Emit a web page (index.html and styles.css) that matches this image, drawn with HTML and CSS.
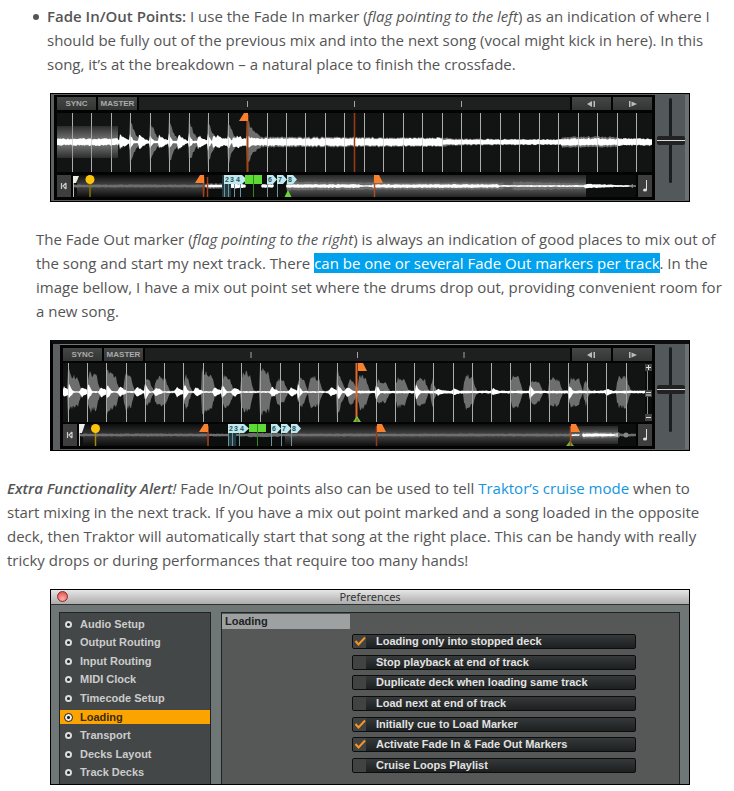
FILE: index.html
```html
<!DOCTYPE html>
<html lang="en">
<head>
<meta charset="utf-8">
<title>Fade In/Out Points</title>
<link rel="stylesheet" href="styles.css">
</head>
<body>
<article>
  <ul class="points">
    <li><strong>Fade In/Out Points:</strong> I use the Fade In marker (<em>flag pointing to the left</em>) as an indication of where I should be fully out of the previous mix and into the next song (vocal might kick in here). In this song, it’s at the breakdown – a natural place to finish the crossfade.</li>
  </ul>

  <figure class="deck">
    <div class="panel">
      <div class="toolbar">
        <button type="button">SYNC</button>
        <button type="button">MASTER</button>
        <svg class="ticks" viewBox="0 0 429 13" preserveAspectRatio="xMinYMid slice"><path d="M108 4v6M214.500 4v6M321 4v6" stroke="#a5a5a5"/></svg>
        <button type="button" aria-label="Beat back"><svg width="10" height="6"><path d="M5 0v6L0 3z M6.500 0h1.500v6h-1.500z" fill="#bbb"/></svg></button>
        <button type="button" aria-label="Beat forward"><svg width="10" height="6"><path d="M1 0h1.500v6H1z M3.500 .5L9 3L3.500 5.500z" fill="#bbb"/></svg></button>
      </div>
      <svg class="wave" id="wave-a" viewBox="0 0 595 59" preserveAspectRatio="xMinYMid slice">
        <defs>
          <linearGradient id="pad" x2="0" y2="1"><stop offset="0" stop-color="#333"/><stop offset=".5" stop-color="#999"/><stop offset="1" stop-color="#333"/></linearGradient>
        </defs>
        <g class="grid"></g>
        <rect x="0" y="13" width="61" height="32" fill="url(#pad)" opacity=".8"/>
        <path class="halo"/>
        <path class="core"/>
        <g class="grid-over"></g>
        <path d="M190.500 2v57" stroke="#a5461a" stroke-width="2"/>
        <path d="M191 0h-4l-5 8h9z" fill="#f9812d"/>
        <path d="M297.500 0v59" stroke="#a03a10" stroke-width="1.500"/>
      </svg>
      <div class="overview">
        <button type="button" aria-label="Jump to start"><svg width="8" height="8"><path d="M1.500 1v6M6 1L3 4l3 3M6 1v6" fill="none" stroke="#ccc" stroke-width="1.200"/></svg></button>
        <svg class="strip" id="strip-a" viewBox="0 0 563 22" preserveAspectRatio="xMinYMid slice">
          <defs>
            <linearGradient id="dim" x2="0" y2="1"><stop offset="0" stop-color="#0c0c0c"/><stop offset=".5" stop-color="#484848"/><stop offset="1" stop-color="#0c0c0c"/></linearGradient>
            <linearGradient id="lit" x2="0" y2="1"><stop offset="0" stop-color="#303030"/><stop offset=".5" stop-color="#8a8a8a"/><stop offset="1" stop-color="#303030"/></linearGradient>
          </defs>
          <rect x="4" width="128" height="22" fill="url(#dim)"/>
          <rect x="214" width="299" height="22" fill="url(#lit)" opacity=".7"/>
          <path class="halo"/>
          <path class="core"/>
          <path d="M556 11l4-2v4z" fill="#888"/>
          <rect x="149" width="9" height="22" fill="#223a42"/>
          <path d="M151.500 4v18M155.500 4v18M161.500 4v18M167.500 4v18M194.500 4v18M204.500 4v18" stroke="#6d959c"/>
          <path d="M0.500 4v18" stroke="#bbb"/><path d="M0 1h6l-3 7H0z" fill="#eef0df"/>
          <path d="M17 5v17" stroke="#857500" stroke-width="1.500"/><circle cx="17" cy="4.500" r="4.500" fill="#fdc40a"/>
          <path d="M130.500 2v20M134.500 2v20" stroke="#a4421a" stroke-width="1.500"/><path d="M131 0h-4l-5 8h9z" fill="#f9812d"/>
          <path d="M151 0h18l5 4.500l-5 4.500h-18z M194 0h6l4 4.500l-4 4.500h-6z M204 0h6l4 4.500l-4 4.500h-6z M214 0h6l4 4.500l-4 4.500h-6z" fill="#bfe9ee"/>
          <g class="cue"><text x="152" y="7">2</text><text x="157" y="7">3</text><text x="163" y="7">4</text><text x="195" y="7">6</text><text x="205" y="7">7</text><text x="215" y="7">8</text></g>
          <path d="M172 0h17v9h-17z" fill="#5fd936"/><path d="M180.500 0v22" stroke="#2c8d19"/>
          <path d="M215 15l3.500 7h-7z" fill="#67d838"/>
          <path d="M301.500 2v20" stroke="#b14c1c" stroke-width="1.500"/><path d="M301 0h5l4 8h-9z" fill="#f9812d"/>
        </svg>
        <button type="button" aria-label="Key lock"><svg width="8" height="14"><path d="M5.500 1v10" stroke="#ddd"/><ellipse cx="4" cy="11" rx="2" ry="1.500" fill="#ddd"/></svg></button>
      </div>
    </div>
    <input class="fader" type="range" aria-label="Tempo" min="0" max="100" value="50">
  </figure>

  <p class="indented">The Fade Out marker (<em>flag pointing to the right</em>) is always an indication of good places to mix out of the song and start my next track. There <mark>can be one or several Fade Out markers per track</mark>. In the image bellow, I have a mix out point set where the drums drop out, providing convenient room for a new song.</p>

  <figure class="deck deck-railed">
    <div class="panel">
      <div class="toolbar">
        <button type="button">SYNC</button>
        <button type="button">MASTER</button>
        <svg class="ticks" viewBox="0 0 423 13" preserveAspectRatio="xMinYMid slice"><path d="M105.500 4v6M211.500 4v6M317.500 4v6" stroke="#a5a5a5"/></svg>
        <button type="button" aria-label="Beat back"><svg width="10" height="6"><path d="M5 0v6L0 3z M6.500 0h1.500v6h-1.500z" fill="#bbb"/></svg></button>
        <button type="button" aria-label="Beat forward"><svg width="10" height="6"><path d="M1 0h1.500v6H1z M3.500 .5L9 3L3.500 5.500z" fill="#bbb"/></svg></button>
      </div>
      <svg class="wave" id="wave-b" viewBox="0 0 589 59" preserveAspectRatio="xMinYMid slice">
        <g class="grid"></g>
        <path class="halo"/>
        <path class="core"/>
        <g class="grid-over"></g>
        <path d="M293.500 0v59" stroke="#e0682c" stroke-width="2"/>
        <path d="M295 0h5l4 8h-9z" fill="#f9812d"/>
        <path d="M294 53l4 6h-8z" fill="#74c443"/><path d="M294 56v3" stroke="#8a4a1c"/>
        <rect x="582" width="7" height="59" fill="#0a0b0b"/>
        <path d="M584.500 8v46" stroke="#888"/>
        <path d="M582 1h7v7h-7z M582 27h7v7h-7z M582 51h7v7h-7z" fill="#444"/>
        <path d="M583 4.500h5M585.500 2v5M583 29.500h5M583 32h5M583 54.500h5" stroke="#ddd"/>
      </svg>
      <div class="overview">
        <button type="button" aria-label="Jump to start"><svg width="8" height="8"><path d="M1.500 1v6M6 1L3 4l3 3M6 1v6" fill="none" stroke="#ccc" stroke-width="1.200"/></svg></button>
        <svg class="strip" id="strip-b" viewBox="0 0 557 22" preserveAspectRatio="xMinYMid slice">
          <rect x="4" width="126" height="22" fill="url(#dim)" opacity=".7"/>
          <rect x="206" width="285" height="22" fill="url(#dim)"/>
          <rect x="491" y="2" width="48" height="18" fill="url(#lit)" opacity=".7"/>
          <path class="halo"/>
          <path class="core"/>
          <path d="M534 11l5-2v4z" fill="#ccc"/><circle cx="547" cy="11" r="2.500" fill="#888"/>
          <rect x="149" width="8" height="22" fill="#223a42"/>
          <path d="M149.500 4v18M153.500 4v18M160.500 4v18M192.500 4v18M202.500 4v18M212.500 4v18" stroke="#6d959c"/>
          <path d="M0.500 4v18" stroke="#bbb"/><path d="M0 0h6l-3 9H0z" fill="#eee"/>
          <path d="M16.500 5v17" stroke="#a58b08" stroke-width="1.500"/><circle cx="16.500" cy="4.500" r="4.500" fill="#fdc40a"/>
          <path d="M129 2v20" stroke="#a4421a" stroke-width="1.500"/><path d="M129 0h-4l-5 8h9z" fill="#f9812d"/>
          <path d="M149 0h16l5 4.500l-5 4.500h-16z M192 0h6l4 4.500l-4 4.500h-6z M202 0h6l4 4.500l-4 4.500h-6z M212 0h6l4 4.500l-4 4.500h-6z" fill="#bfe9ee"/>
          <g class="cue"><text x="150" y="7">2</text><text x="155" y="7">3</text><text x="161" y="7">4</text><text x="193" y="7">6</text><text x="203" y="7">7</text><text x="213" y="7">8</text></g>
          <path d="M170 0h17v8h-17z" fill="#5fd936"/><path d="M178.500 0v22" stroke="#2c8d19"/>
          <path d="M297.500 2v20" stroke="#8c3f1c" stroke-width="1.500"/><path d="M298 0h5l4 8h-9z" fill="#f9812d"/>
          <path d="M491 17l4 5h-8z" fill="#67b838"/>
          <path d="M491.500 2v20" stroke="#b14c1c" stroke-width="1.500"/><path d="M492 0h5l4 8h-9z" fill="#f9812d"/>
        </svg>
        <button type="button" aria-label="Key lock"><svg width="8" height="14"><path d="M5.500 1v10" stroke="#ddd"/><ellipse cx="4" cy="11" rx="2" ry="1.500" fill="#ddd"/></svg></button>
      </div>
    </div>
    <input class="fader" type="range" aria-label="Tempo" min="0" max="100" value="50">
  </figure>

  <p><em><strong>Extra Functionality Alert</strong>!</em> Fade In/Out points also can be used to tell <a href="#">Traktor’s cruise mode</a> when to start mixing in the next track. If you have a mix out point marked and a song loaded in the opposite deck, then Traktor will automatically start that song at the right place. This can be handy with really tricky drops or during performances that require too many hands!</p>

  <figure class="prefs">
    <header class="titlebar"><button class="close" type="button" aria-label="Close"></button><span>Preferences</span></header>
    <div class="prefs-body">
      <div class="sections">
        <label><input type="radio" name="section"><span>Audio Setup</span></label>
        <label><input type="radio" name="section"><span>Output Routing</span></label>
        <label><input type="radio" name="section"><span>Input Routing</span></label>
        <label><input type="radio" name="section"><span>MIDI Clock</span></label>
        <label><input type="radio" name="section"><span>Timecode Setup</span></label>
        <label><input type="radio" name="section" checked><span>Loading</span></label>
        <label><input type="radio" name="section"><span>Transport</span></label>
        <label><input type="radio" name="section"><span>Decks Layout</span></label>
        <label><input type="radio" name="section"><span>Track Decks</span></label>
      </div>
      <div class="settings">
        <h2>Loading</h2>
        <div class="options">
          <label><input type="checkbox" checked><svg viewBox="0 0 12 12"><path d="M1.500 6L4.500 9.500L11 2.500"/></svg><span>Loading only into stopped deck</span></label>
          <label><input type="checkbox"><svg viewBox="0 0 12 12"><path d="M1.500 6L4.500 9.500L11 2.500"/></svg><span>Stop playback at end of track</span></label>
          <label><input type="checkbox"><svg viewBox="0 0 12 12"><path d="M1.500 6L4.500 9.500L11 2.500"/></svg><span>Duplicate deck when loading same track</span></label>
          <label><input type="checkbox"><svg viewBox="0 0 12 12"><path d="M1.500 6L4.500 9.500L11 2.500"/></svg><span>Load next at end of track</span></label>
          <label><input type="checkbox" checked><svg viewBox="0 0 12 12"><path d="M1.500 6L4.500 9.500L11 2.500"/></svg><span>Initially cue to Load Marker</span></label>
          <label><input type="checkbox" checked><svg viewBox="0 0 12 12"><path d="M1.500 6L4.500 9.500L11 2.500"/></svg><span>Activate Fade In &amp; Fade Out Markers</span></label>
          <label><input type="checkbox"><svg viewBox="0 0 12 12"><path d="M1.500 6L4.500 9.500L11 2.500"/></svg><span>Cruise Loops Playlist</span></label>
        </div>
      </div>
    </div>
  </figure>
</article>
<script src="waves.js"></script>
</body>
</html>
```
FILE: styles.css
```css
* { box-sizing: border-box; }

body {
  margin: 0;
  padding: 4px 10px 6px 7px;
  background: #fff;
  color: #555;
  font: 15px/24px "Open Sans", sans-serif;
}

p { margin: 0; }
.indented { padding-left: 29px; }

.points {
  margin: 0;
  padding-left: 40px;
  list-style: none;
}
.points li { position: relative; }
.points li::before {
  content: "";
  position: absolute;
  left: -14px;
  top: 10px;
  width: 6px;
  height: 6px;
  border-radius: 50%;
  background: #555;
}

strong { font-weight: 600; }
em { font-style: italic; }
mark { background: #00a2ed; color: #fff; }
a { color: #1296e0; text-decoration: none; }

button {
  display: flex;
  align-items: center;
  justify-content: center;
  margin: 0;
  padding: 0;
  border: 0;
}

figure {
  max-width: 640px;
  margin: 17px 34px 25px 43px;
  border: 1px solid #000;
}

/* Track decks */
.deck {
  display: grid;
  grid-template-columns: 1fr 34px;
  padding: 1px 0 1px 3px;
  background: #5d6061;
}

.panel {
  display: flex;
  flex-direction: column;
  gap: 3px;
  min-width: 0;
  padding: 2px 3px 3px;
  background: #030303;
}

.deck-railed {
  border-left-width: 3px;
  padding: 0 0 1px 7px;
  border-top: 4px solid #0c0d0e;
}
.deck-railed .panel {
  gap: 2px;
  border-top: 1px solid #777;
  padding-top: 3px;
}

.toolbar { display: flex; gap: 2px; height: 13px; }

.toolbar button {
  flex: 0 0 39px;
  background: linear-gradient(#454646, #333434);
  color: #aaa;
  font: bold 8px/13px "Liberation Sans", sans-serif;
}

.ticks { flex: 1; min-width: 0; height: 13px; background: #1e2020; }

.wave { display: block; width: 100%; height: 59px; background: #121414; }

.overview { display: flex; gap: 2px; height: 22px; }
.overview button { flex: 0 0 14px; background: #3e3e3f; }
.strip { flex: 1; min-width: 0; height: 22px; background: #0d0e0e; }

.halo { fill: #6e6e6e; }
.core { fill: #fff; }
.grid path { stroke: #8c8c8c; }
.grid-over path { stroke: #c4c4c4; opacity: .6; }
.cue text { fill: #27505a; font: bold 7px "Liberation Sans", sans-serif; }

.fader {
  appearance: none;
  writing-mode: vertical-lr;
  width: 34px;
  height: 0;
  min-height: 100%;
  margin: 0;
  padding: 3px 0 17px;
  border-right: 4px solid #6c7173;
  background: #53585a;
}
.fader::-webkit-slider-runnable-track {
  width: 3px;
  border-radius: 2px;
  background: #1b1e20;
}
.fader::-webkit-slider-thumb {
  appearance: none;
  width: 28px;
  height: 9px;
  margin-left: -12px;
  border-radius: 2px;
  background: linear-gradient(#222 4px, #ddd 4px, #ddd 5px, #222 5px);
}

/* Preferences window */
.prefs {
  margin-bottom: 0;
  background: #6f7676;
  color: #ccc;
  font: bold 11px/15px "Liberation Sans", sans-serif;
}

.titlebar {
  position: relative;
  height: 15px;
  border-bottom: 1px solid #333;
  background: linear-gradient(#e6e6e6, #acacac);
  color: #333;
  font: 11px/14px "Noto Sans", sans-serif;
  text-align: center;
}

.close {
  position: absolute;
  left: 6px;
  top: 1px;
  width: 11px;
  height: 11px;
  border: 1px solid #8f2a2a;
  border-radius: 50%;
  background: radial-gradient(circle at 50% 75%, #ffb0a8, #d9433f);
}

.prefs-body {
  display: grid;
  grid-template-columns: 152px 1fr;
  gap: 10px;
  padding: 7px 9px 0 8px;
}

.sections {
  display: grid;
  grid-auto-rows: 1fr;
  height: 172px;
  padding: 2px 0 2px;
  border: 1px solid #222;
  border-bottom: 0;
  background: #444748;
}
.sections label {
  display: flex;
  align-items: center;
  gap: 8px;
  padding-left: 4px;
}
.sections label:has(:checked) {
  background: linear-gradient(transparent 2px, #fba400 2px, #fba400 calc(100% - 2px), transparent calc(100% - 2px));
  color: #3a2a10;
}
.sections input {
  appearance: none;
  width: 7px;
  height: 7px;
  margin: 0 0 0 1px;
  border: 2px solid #ddd;
  border-radius: 50%;
  background: #222;
}
.sections input:checked {
  width: 9px;
  height: 9px;
  margin: 0 -1px 0 0;
  border: 1px solid #222;
  background: radial-gradient(#222 1px, #eee 2px);
}

.settings {
  border: 1px solid #222;
  border-bottom: 0;
  background: #565757;
}
.settings h2 {
  width: 128px;
  margin: 1px 0 5px;
  padding-left: 3px;
  background: #9da1a1;
  color: #222;
  font: inherit;
}

.options {
  display: flex;
  flex-direction: column;
  justify-content: space-between;
  height: 139px;
  margin: 0 43px 0 130px;
}
.options label {
  position: relative;
  display: flex;
  align-items: center;
  gap: 10px;
  height: 15px;
  overflow: hidden;
  border: 1px solid #0c0d0d;
  border-radius: 2px;
  background: linear-gradient(#363939, #1d2020);
  color: #e2e2e2;
  line-height: 13px;
}
.options input {
  appearance: none;
  width: 13px;
  height: 13px;
  margin: 0;
  background: #414343;
}
.options svg {
  position: absolute;
  left: 1px;
  top: 0;
  width: 12px;
  height: 12px;
  visibility: hidden;
}
.options :checked + svg { visibility: visible; }
.options path { fill: none; stroke: #f99422; stroke-width: 2; }
```
FILE: waves.js
```js
// Each burst is [start, end, peak, tail]: the level falls from peak to tail.
const noise = x => { const v = Math.sin(x * 12.9898) * 43758.5453; return v - Math.floor(v); };

function envelope(bursts, width, mid, jitter) {
  const level = new Array(width + 1).fill(0);
  for (const [a, b, peak, tail] of bursts) {
    for (let x = Math.max(0, a); x <= Math.min(width, b); x++) {
      const v = peak + (tail - peak) * (x - a) / (b - a || 1);
      level[x] = Math.max(level[x], v);
    }
  }
  const top = [], bottom = [];
  level.forEach((v, x) => {
    const up = v * (1 - jitter * noise(x + 1)), down = v * (1 - jitter * noise(x + 500));
    top.push(`${x} ${(mid - up).toFixed(1)}`);
    bottom.unshift(`${x} ${(mid + down).toFixed(1)}`);
  });
  return `M${top.join('L')}L${bottom.join('L')}Z`;
}

function draw(id, width, mid, halo, core) {
  const svg = document.getElementById(id);
  svg.querySelector('.halo').setAttribute('d', envelope(halo, width, mid, .3));
  svg.querySelector('.core').setAttribute('d', envelope(core, width, mid, .4));
  return svg;
}

function grid(svg, xs) {
  const lines = xs.map(x => `<path d="M${x + .5} 0v59"/>`).join('');
  svg.querySelector('.grid').innerHTML = lines;
  svg.querySelector('.grid-over').innerHTML = lines;
}

// Breakdown track
const beatsA = Array.from({ length: 30 }, (_, i) => Math.round(15 + i * 19.45));
const haloA = [[190, 196, 26, 14], [196, 206, 13, 5], [206, 390, 6, 5], [390, 505, 4, 3], [505, 560, 6, 6], [560, 595, 4, 4]];
const coreA = [[0, 61, 4, 4], [0, 195, 1.5, 1.5], [63, 72, 8, 2], [156, 170, 7, 4], [176, 190, 6, 4], [190, 196, 7, 5], [196, 385, 4.5, 4.5], [385, 505, 3, 3], [505, 595, 4, 4]];
for (const x of [73, 93, 112, 132, 151, 171]) {
  haloA.push([x, x + 4, 26, 13], [x + 4, x + 9, 12, 3]);
  coreA.push([x, x + 3, 9, 3], [x + 9, x + 18, 8, 2]);
}
grid(draw('wave-a', 595, 29, haloA, coreA), beatsA);

draw('strip-a', 563, 11,
  [[0, 132, 1.5, 1.5], [133, 160, 3, 3], [214, 300, 5, 4], [300, 430, 4, 4], [440, 512, 5, 3], [512, 563, 1, 1]],
  [[133, 150, 1.5, 1.5], [158, 172, 3, 2], [189, 200, 2, 2], [214, 286, 2, 2], [286, 300, 1, 1], [300, 425, 2, 2], [425, 512, 1, 1], [512, 540, 2.5, 1.5], [540, 556, 1, 1]]);

// Drum track
const beatsB = Array.from({ length: 30 }, (_, i) => Math.round(5 + i * 19.23));
const hitsB = [[68, 80, 20], [88, 99, 22], [107, 118, 21], [124, 133, 20], [145, 152, 15], [155, 168, 17], [184, 190, 18],
  [202, 214, 23], [222, 232, 18], [241, 252, 23], [260, 271, 26], [276, 286, 15], [298, 306, 17], [309, 321, 18], [338, 344, 14],
  [348, 356, 14], [358, 368, 19], [376, 388, 13], [396, 407, 17], [416, 427, 16], [431, 435, 16], [464, 475, 19], [511, 521, 20],
  [530, 541, 14], [549, 561, 17], [569, 581, 17], [584, 588, 15], [617, 629, 19]];
const haloB = [[0, 582, 1.5, 1.5]];
for (const [a, b, h] of hitsB) {
  const s = a - 63, e = b - 63;
  haloB.push([s, s + 2, h * .6, h], [s + 2, e - 2, h, h * .85], [e - 2, e + 1, h * .75, 4]);
}
for (const x of [68, 107, 202, 260, 337]) haloB.push([x - 63, x - 60, 28, 18]);
const coreB = [[0, 290, 1, 1], [290, 582, 1.5, 1.5]];
for (const x of [62, 80, 99, 118, 135, 154, 175, 194, 213, 232, 270, 289, 329, 345, 436, 452, 491, 605]) {
  const p = x > 400 ? 4 : 6;
  coreB.push([x - 63, x - 61, 2, p], [x - 61, x - 54, p, 1]);
}
for (const x of [69, 88, 107, 145, 184, 222, 298, 338, 376, 416, 530, 569]) coreB.push([x - 63, x - 59, 9, 2]);
grid(draw('wave-b', 589, 29, haloB, coreB), beatsB);

draw('strip-b', 557, 11,
  [[0, 557, 1.5, 1.5], [170, 200, 2.5, 2], [206, 490, 1.5, 1.5], [504, 540, 4, 3]],
  [[493, 500, 1, 1], [504, 538, 2, 1.5]]);
```
